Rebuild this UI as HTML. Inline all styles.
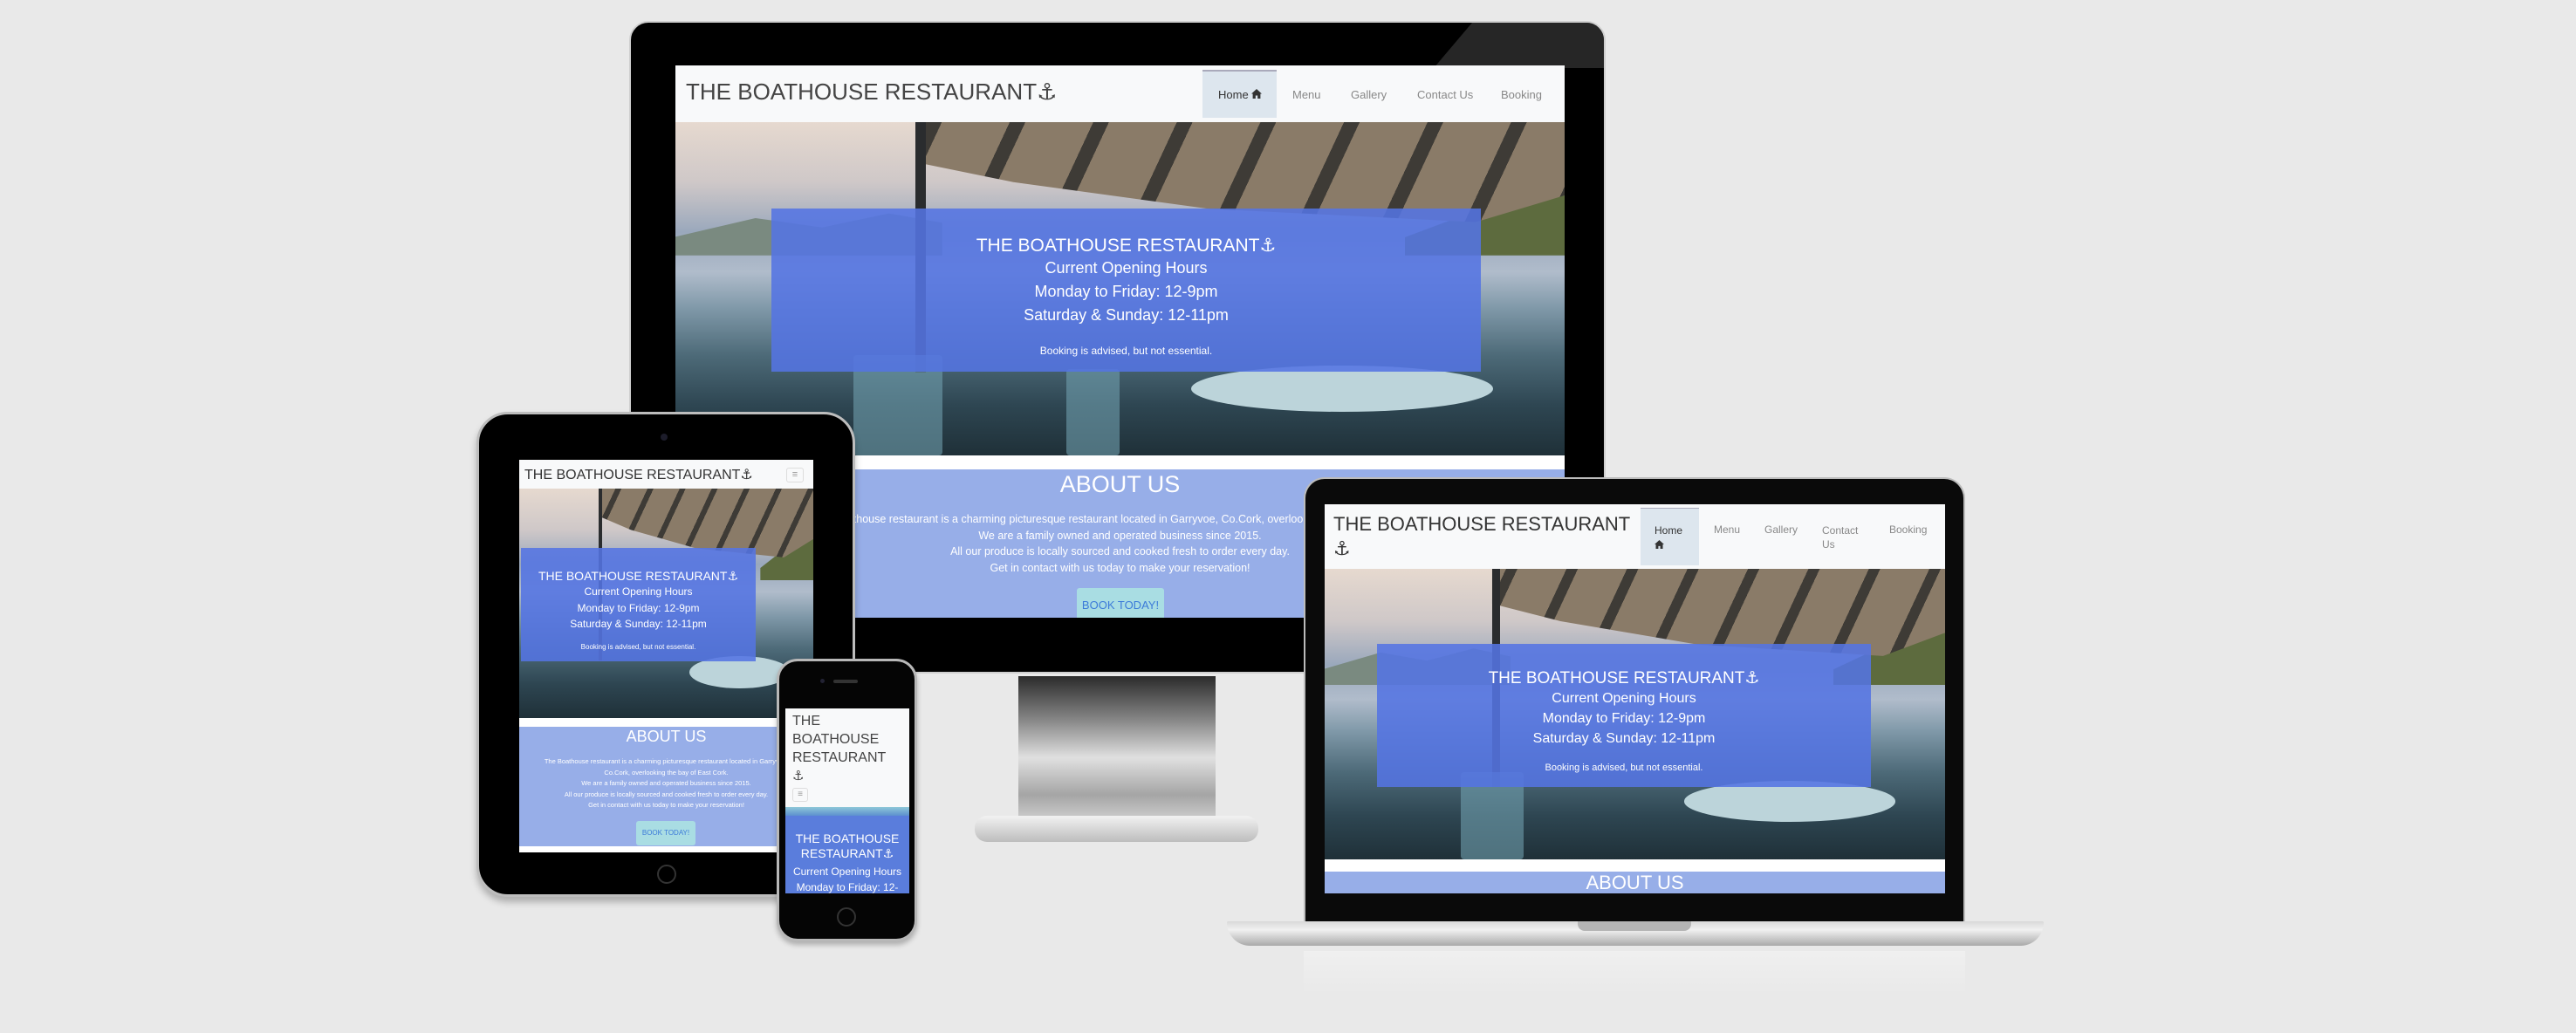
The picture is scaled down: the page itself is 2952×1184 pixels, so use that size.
<!DOCTYPE html>
<html><head><meta charset="utf-8">
<style>
*{margin:0;padding:0;box-sizing:border-box}
body{width:2952px;height:1184px;background:#e9e9e9;position:relative;overflow:hidden;font-family:"Liberation Sans Narrow","Liberation Sans","DejaVu Sans",sans-serif}
.a{position:absolute}
.scr{position:absolute;overflow:hidden;background:#fff}
.nav{position:absolute;left:0;top:0;width:100%;background:#f8f9fa;color:#444}
.photo{position:absolute;left:0;width:100%;overflow:hidden;
background:linear-gradient(to bottom,#e6d9cf 0%,#cfc8c8 18%,#9aa8bc 33%,#b0bccb 45%,#7f98a8 56%,#4d6a78 70%,#2e4652 85%,#1f3038 100%)}
.photo .awn{position:absolute;left:0;top:0;width:100%;height:100%;
clip-path:polygon(27% 0,100% 0,100% 22%,90% 30%,60% 26%,38% 18%,27% 12%);
background:repeating-linear-gradient(115deg,#3e3b36 0 1.5%,#8a7b68 1.5% 8%)}
.photo .post{position:absolute;top:0;height:75%;width:1.2%;left:27%;background:#2a2c2e}
.photo .hill{position:absolute;left:0;top:26%;width:30%;height:14%;background:#7a8a80;clip-path:polygon(0 60%,30% 20%,55% 40%,80% 10%,100% 30%,100% 100%,0 100%)}
.photo .isl{position:absolute;right:0;top:22%;width:18%;height:18%;background:#5d6b3e;clip-path:polygon(0 70%,40% 30%,100% 0,100% 100%,0 100%)}
.photo .tbl{position:absolute;left:58%;top:73%;width:34%;height:14%;border-radius:50%;background:#bcd4da}
.photo .chr{position:absolute;background:#6f9fae;border-radius:4px;opacity:.6}
.box{position:absolute;background:rgba(84,116,226,.88);color:#fff;text-align:center}
.about{position:absolute;left:0;width:100%;background:#97aee8;color:#fff;text-align:center}
.btn{position:absolute;background:#a9dde3;color:#3c7bd9;border-radius:3px;text-align:center}
.ham{position:absolute;border:1px solid #ddd;border-radius:3px;color:#999;text-align:center}
</style></head><body>

<!-- MONITOR -->
<div class="a" style="left:721px;top:24px;width:1119px;height:748px;background:#000;border-radius:22px;border:2px solid #cfcfcf;overflow:hidden">
  <div class="a" style="left:920px;top:0;width:200px;height:52px;background:#262626;clip-path:polygon(22% 0,100% 0,100% 100%,0 100%)"></div>
</div>
<div class="a" style="left:1167px;top:775px;width:226px;height:170px;background:linear-gradient(to bottom,#2b2b2b 0%,#888 30%,#e0e0e0 55%,#a5a5a5 80%,#d5d5d5 100%)"></div>
<div class="a" style="left:1117px;top:935px;width:325px;height:30px;border-radius:14px;background:linear-gradient(#f2f2f2,#bdbdbd)"></div>

<div class="scr" style="left:774px;top:75px;width:1019px;height:633px">
  <div class="nav" style="height:65px">
    <div class="a" style="left:12px;top:15px;font-size:26px;color:#444;white-space:nowrap">THE BOATHOUSE RESTAURANT<span style="font-family:'DejaVu Sans'">⚓</span></div>
    <div class="a" style="left:604px;top:5px;width:85px;height:55px;background:#dde6ee;border-top:2px solid #aab"></div>
    <div class="a" style="left:622px;top:26px;font-size:13px;color:#333">Home <svg width="12" height="11" viewBox="0 0 12 11"><path d="M6 0L0 5.5h1.6V11h3.2V7.5h2.4V11h3.2V5.5H12z" fill="#333"/></svg></div>
    <div class="a" style="left:707px;top:26px;font-size:13px;color:#888">Menu</div>
    <div class="a" style="left:774px;top:26px;font-size:13px;color:#888">Gallery</div>
    <div class="a" style="left:850px;top:26px;font-size:13px;color:#888">Contact Us</div>
    <div class="a" style="left:946px;top:26px;font-size:13px;color:#888">Booking</div>
  </div>
  <div class="photo" style="top:65px;height:382px"><div class="hill"></div><div class="isl"></div><div class="awn"></div><div class="post"></div><div class="tbl"></div>
    <div class="chr" style="left:20%;top:70%;width:10%;height:30%"></div><div class="chr" style="left:44%;top:74%;width:6%;height:26%"></div></div>
  <div class="box" style="left:110px;top:164px;width:813px;height:187px">
    <div style="margin-top:30px;font-size:21px">THE BOATHOUSE RESTAURANT<span style="font-family:'DejaVu Sans'">⚓</span></div>
    <div style="font-size:18px;line-height:27px">Current Opening Hours<br>Monday to Friday: 12-9pm<br>Saturday &amp; Sunday: 12-11pm</div>
    <div style="font-size:12px;margin-top:20px">Booking is advised, but not essential.</div>
  </div>
  <div class="about" style="top:463px;height:170px">
    <div style="font-size:27px;margin-top:2px">ABOUT US</div>
    <div style="font-size:12.5px;line-height:18.5px;margin-top:15px;white-space:nowrap;margin-left:-110px;width:1239px">The Boathouse restaurant is a charming picturesque restaurant located in Garryvoe, Co.Cork, overlooking the bay of East Cork.<br>We are a family owned and operated business since 2015.<br>All our produce is locally sourced and cooked fresh to order every day.<br>Get in contact with us today to make your reservation!</div>
    <div class="btn" style="left:460px;top:136px;width:100px;height:40px;font-size:13px;line-height:40px">BOOK TODAY!</div>
  </div>
</div>

<!-- LAPTOP -->
<div class="a" style="left:1494px;top:547px;width:758px;height:512px;background:#0a0a0a;border-radius:24px 24px 0 0;border:2px solid #bcbcbc;border-bottom:none"></div>
<div class="a" style="left:1406px;top:1056px;width:936px;height:28px;border-radius:2px 2px 40px 40px;background:linear-gradient(#d9d9d9,#f1f1f1 35%,#a9a9a9)"></div>
<div class="a" style="left:1808px;top:1056px;width:130px;height:11px;border-radius:0 0 8px 8px;background:#b5b5b5"></div>
<div class="a" style="left:1494px;top:1090px;width:758px;height:50px;background:linear-gradient(rgba(255,255,255,.3),rgba(233,233,233,0))"></div>
<div class="scr" style="left:1518px;top:578px;width:711px;height:446px">
  <div class="nav" style="height:74px">
    <div class="a" style="left:10px;top:9px;font-size:22px;line-height:28px;color:#333">THE BOATHOUSE RESTAURANT<br><span style="font-family:'DejaVu Sans';font-size:22px">⚓</span></div>
    <div class="a" style="left:362px;top:4px;width:67px;height:66px;background:#dde6ee;border-top:1px solid #aab"></div>
    <div class="a" style="left:378px;top:22px;font-size:12px;line-height:17px;color:#333">Home<br><svg width="11" height="10" viewBox="0 0 12 11"><path d="M6 0L0 5.5h1.6V11h3.2V7.5h2.4V11h3.2V5.5H12z" fill="#333"/></svg></div>
    <div class="a" style="left:446px;top:22px;font-size:12px;color:#888">Menu</div>
    <div class="a" style="left:504px;top:22px;font-size:12px;color:#888">Gallery</div>
    <div class="a" style="left:570px;top:22px;font-size:12px;line-height:16px;color:#888">Contact<br>Us</div>
    <div class="a" style="left:647px;top:22px;font-size:12px;color:#888">Booking</div>
  </div>
  <div class="photo" style="top:74px;height:333px"><div class="hill"></div><div class="isl"></div><div class="awn"></div><div class="post"></div><div class="tbl"></div>
    <div class="chr" style="left:22%;top:70%;width:10%;height:30%"></div></div>
  <div class="box" style="left:60px;top:160px;width:566px;height:164px">
    <div style="margin-top:28px;font-size:19px">THE BOATHOUSE RESTAURANT<span style="font-family:'DejaVu Sans'">⚓</span></div>
    <div style="font-size:16px;line-height:23px">Current Opening Hours<br>Monday to Friday: 12-9pm<br>Saturday &amp; Sunday: 12-11pm</div>
    <div style="font-size:11px;margin-top:16px">Booking is advised, but not essential.</div>
  </div>
  <div class="about" style="top:421px;height:30px"><div style="font-size:22px;line-height:26px">ABOUT US</div></div>
</div>

<!-- TABLET -->
<div class="a" style="left:546px;top:472px;width:434px;height:556px;background:#000;border-radius:36px;border:3px solid #bdbdbd;box-shadow:0 6px 8px rgba(0,0,0,.25)"></div>
<div class="a" style="left:757px;top:497px;width:8px;height:8px;border-radius:50%;background:#1c1c2a"></div>
<div class="a" style="left:753px;top:991px;width:22px;height:22px;border-radius:50%;border:2px solid #333"></div>
<div class="scr" style="left:595px;top:527px;width:337px;height:450px">
  <div class="nav" style="height:33px">
    <div class="a" style="left:6px;top:7px;font-size:16px;color:#333;white-space:nowrap">THE BOATHOUSE RESTAURANT<span style="font-family:'DejaVu Sans'">⚓</span></div>
    <div class="ham" style="left:306px;top:9px;width:20px;height:17px;font-size:11px;line-height:15px">≡</div>
  </div>
  <div class="photo" style="top:33px;height:263px"><div class="isl"></div><div class="awn"></div><div class="post"></div><div class="tbl"></div></div>
  <div class="box" style="left:2px;top:101px;width:269px;height:130px">
    <div style="margin-top:24px;font-size:14px">THE BOATHOUSE RESTAURANT<span style="font-family:'DejaVu Sans'">⚓</span></div>
    <div style="font-size:12px;line-height:18.5px">Current Opening Hours<br>Monday to Friday: 12-9pm<br>Saturday &amp; Sunday: 12-11pm</div>
    <div style="font-size:8px;margin-top:12px">Booking is advised, but not essential.</div>
  </div>
  <div class="about" style="top:306px;height:137px">
    <div style="font-size:18px;margin-top:1px">ABOUT US</div>
    <div style="font-size:7.5px;line-height:12.5px;margin-top:12px">The Boathouse restaurant is a charming picturesque restaurant located in Garryvoe,<br>Co.Cork, overlooking the bay of East Cork.<br>We are a family owned and operated business since 2015.<br>All our produce is locally sourced and cooked fresh to order every day.<br>Get in contact with us today to make your reservation!</div>
    <div class="btn" style="left:134px;top:108px;width:68px;height:28px;font-size:8px;line-height:28px">BOOK TODAY!</div>
  </div>
</div>

<!-- PHONE -->
<div class="a" style="left:890px;top:755px;width:161px;height:324px;background:#050505;border-radius:24px;border:3px solid #b8b8b8;box-shadow:0 4px 6px rgba(0,0,0,.25)"></div>
<div class="a" style="left:940px;top:778px;width:5px;height:5px;border-radius:50%;background:#223"></div>
<div class="a" style="left:955px;top:779px;width:28px;height:4px;border-radius:2px;background:#333"></div>
<div class="a" style="left:959px;top:1040px;width:22px;height:22px;border-radius:50%;border:2px solid #333"></div>
<div class="scr" style="left:900px;top:812px;width:142px;height:212px">
  <div class="nav" style="height:113px">
    <div class="a" style="left:8px;top:4px;font-size:16px;line-height:21px;color:#444">THE<br>BOATHOUSE<br>RESTAURANT<br><span style="font-family:'DejaVu Sans';font-size:15px">⚓</span></div>
    <div class="ham" style="left:8px;top:91px;width:18px;height:16px;font-size:10px;line-height:14px">≡</div>
  </div>
  <div class="a" style="left:0;top:113px;width:142px;height:10px;background:linear-gradient(#8ec8d8,#5d8fcf)"></div>
  <div class="a" style="left:0;top:123px;width:142px;height:89px;background:#5a7ddc;color:#fff;text-align:center">
    <div style="margin-top:18px;font-size:14px;line-height:17px">THE BOATHOUSE<br>RESTAURANT<span style="font-family:'DejaVu Sans'">⚓</span></div>
    <div style="font-size:12px;line-height:18px;margin-top:2px;white-space:nowrap">Current Opening Hours<br>Monday to Friday: 12-</div>
  </div>
</div>

</body></html>
